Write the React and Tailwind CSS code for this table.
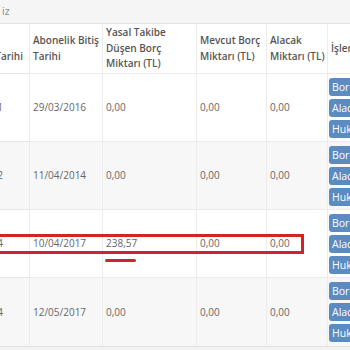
import React from "react";

const rows = [
  { first: "29/03/2011", end: "29/03/2016", yasal: "0,00", mevcut: "0,00", alacak: "0,00", bg: "bg-white" },
  { first: "11/04/2012", end: "11/04/2014", yasal: "0,00", mevcut: "0,00", alacak: "0,00", bg: "bg-[#f7f7f7]" },
  { first: "10/04/2014", end: "10/04/2017", yasal: "238,57", mevcut: "0,00", alacak: "0,00", bg: "bg-white" },
  { first: "12/05/2014", end: "12/05/2017", yasal: "0,00", mevcut: "0,00", alacak: "0,00", bg: "bg-[#f7f7f7]" },
];

function Btn({ children }) {
  return (
    <div className="h-[18px] w-[64px] rounded-[3px] bg-[#5b8bc1] text-white text-[10.5px] leading-[18px] pl-[3px] whitespace-nowrap">
      {children}
    </div>
  );
}

export default function App() {
  const cell = "border-l border-[#ececec] pl-[3px] flex items-center";
  return (
    <div
      className="relative w-[350px] h-[350px] overflow-hidden bg-[#f2f2f2] text-[10px] text-[#666]"
      style={{ fontFamily: "'Open Sans', 'Noto Sans', sans-serif" }}
    >
      <div className="h-[24px] bg-[#f5f5f5] border-b border-[#e2e2e2] flex items-center pl-[2px] text-[#888] text-[10.5px]">
        iz
      </div>
      <div className="grid grid-cols-[29px_73px_94px_70px_61px_1fr] bg-white border-b border-[#e2e2e2]">
        {/* header */}
        <div className="h-[50px] border-b border-[#e2e2e2] flex items-center justify-end pr-[6px] text-[#555] font-semibold leading-[15.5px] whitespace-nowrap">
          <div>
            <div>&nbsp;</div>
            <div>Tarihi</div>
          </div>
        </div>
        <div className={`h-[50px] border-b border-[#e2e2e2] ${cell} text-[#555] font-semibold leading-[15.5px]`}>
          <div>
            <div>Abonelik Bitiş</div>
            <div>Tarihi</div>
          </div>
        </div>
        <div className={`h-[50px] border-b border-[#e2e2e2] ${cell} text-[#555] font-semibold leading-[15.5px]`}>
          <div>
            <div>Yasal Takibe</div>
            <div>Düşen Borç</div>
            <div>Miktarı (TL)</div>
          </div>
        </div>
        <div className={`h-[50px] border-b border-[#e2e2e2] ${cell} text-[#555] font-semibold leading-[15.5px]`}>
          <div>
            <div>Mevcut Borç</div>
            <div>Miktarı (TL)</div>
          </div>
        </div>
        <div className={`h-[50px] border-b border-[#e2e2e2] ${cell} text-[#555] font-semibold leading-[15.5px]`}>
          <div>
            <div>Alacak</div>
            <div>Miktarı (TL)</div>
          </div>
        </div>
        <div className={`h-[50px] border-b border-[#e2e2e2] ${cell} text-[#555] font-semibold whitespace-nowrap`}>
          İşlemler
        </div>

        {rows.map((r, i) => {
          const last = i === rows.length - 1;
          const bb = last ? "" : "border-b border-[#e6e6e6]";
          return (
            <React.Fragment key={i}>
              <div className={`h-[68px] ${bb} ${r.bg} flex items-center justify-end pr-[26px] whitespace-nowrap`}>
                {r.first}
              </div>
              <div className={`h-[68px] ${bb} ${r.bg} ${cell}`}>{r.end}</div>
              <div className={`h-[68px] ${bb} ${r.bg} ${cell}`}>{r.yasal}</div>
              <div className={`h-[68px] ${bb} ${r.bg} ${cell}`}>{r.mevcut}</div>
              <div className={`h-[68px] ${bb} ${r.bg} ${cell}`}>{r.alacak}</div>
              <div className={`h-[68px] ${bb} ${r.bg} border-l border-[#ececec] pl-[1px] pt-[4px] flex flex-col gap-[3px]`}>
                <Btn>Borç Detay</Btn>
                <Btn>Alacak Detay</Btn>
                <Btn>Hukuk Detay</Btn>
              </div>
            </React.Fragment>
          );
        })}
      </div>

      {/* annotation overlays */}
      <div className="absolute left-[-10px] top-[234px] w-[314px] h-[20px] border-[3px] border-[#d2232a]" />
      <div className="absolute left-[105px] top-[259px] w-[31px] h-[3px] rounded-full bg-[#d2232a]" />
    </div>
  );
}
